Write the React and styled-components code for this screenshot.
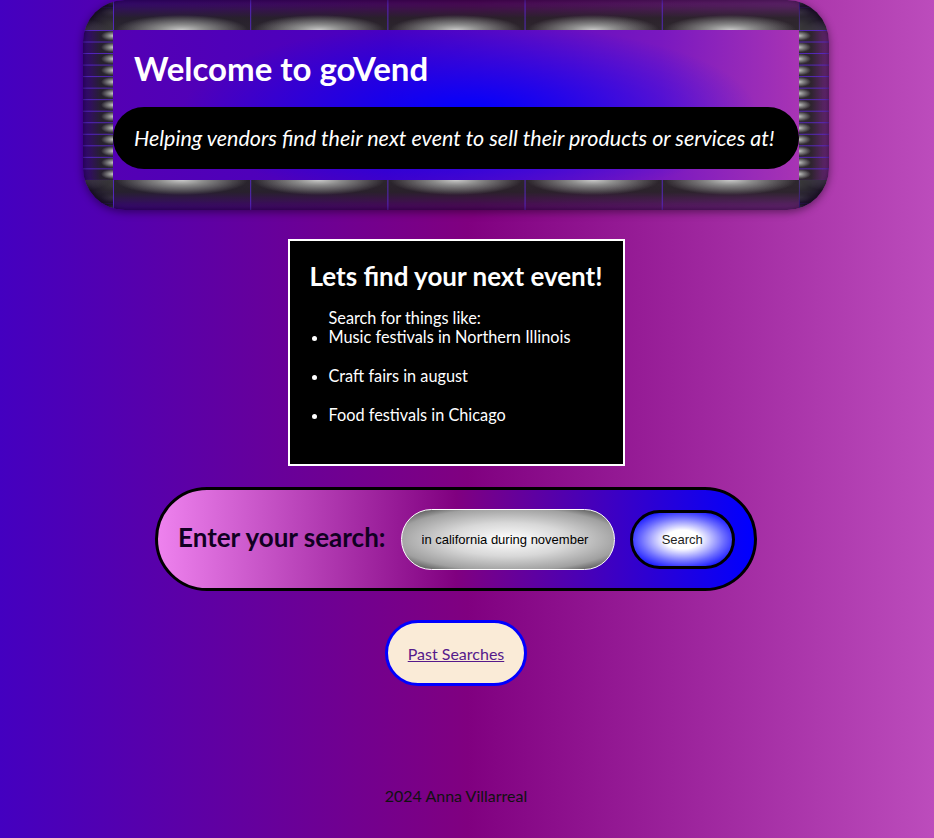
import React from 'react';
import styled, { createGlobalStyle } from 'styled-components';

const GlobalStyle = createGlobalStyle`
  html, body {
    margin: 0;
    padding: 0;
  }
  body {
    min-height: 838px;
    background: linear-gradient(to right, #4400c0 0%, #800080 50%, #bc4cbc 100%);
    font-family: "Lato", "DejaVu Sans", sans-serif;
  }
`;

// one tile of the banner frame: a grey glow against the inner edge, a dark body, a thin seam
const glowH = (at) =>
  `radial-gradient(ellipse 66px 15px at 50% ${at}, #c8c8c8 0%, #8a8a8a 35%, rgba(50,50,50,0) 100%)`;
const glowV = (at) =>
  `radial-gradient(ellipse 12px 5px at ${at} 50%, #c8c8c8 0%, #8a8a8a 35%, rgba(50,50,50,0) 100%)`;
const seamH = `linear-gradient(to right, rgba(90,40,210,0.85) 0 1px, rgba(0,0,0,0) 1px)`;
const seamV = `linear-gradient(to bottom, rgba(90,40,210,0.85) 0 1px, rgba(0,0,0,0) 1px)`;
const body = (dir) =>
  `linear-gradient(${dir}, rgba(25,10,60,0.45) 0%, rgba(35,35,35,0.92) 60%, rgba(40,40,40,0.95) 100%)`;
const corner = (pos) =>
  `radial-gradient(circle at ${pos}, rgba(70,70,70,0.6) 0%, rgba(25,10,45,0.5) 55%, rgba(20,0,60,0.25) 100%)`;

const H = '30px 0 / 137.2px 30px repeat-x';
const B = '30px 100% / 137.2px 30px repeat-x';
const L = '0 30px / 30px 11.54px repeat-y';
const R = '100% 30px / 30px 11.54px repeat-y';

const Page = styled.div`
  width: 912px;
  display: flex;
  flex-direction: column;
  align-items: center;
`;

const Banner = styled.header`
  width: 746px;
  height: 210px;
  box-sizing: border-box;
  padding: 30px;
  border-radius: 42px;
  box-shadow: inset 0 0 6px rgba(0, 0, 0, 0.6), 0 2px 9px rgba(0, 0, 0, 0.45);
  background:
    ${corner('100% 100%')} 0 0 / 30px 30px no-repeat,
    ${corner('0% 100%')} 100% 0 / 30px 30px no-repeat,
    ${corner('100% 0%')} 0 100% / 30px 30px no-repeat,
    ${corner('0% 0%')} 100% 100% / 30px 30px no-repeat,
    ${seamH} ${H}, ${glowH('100%')} ${H}, ${body('to bottom')} ${H},
    ${seamH} ${B}, ${glowH('0%')} ${B}, ${body('to top')} ${B},
    ${seamV} ${L}, ${glowV('100%')} ${L}, ${body('to right')} ${L},
    ${seamV} ${R}, ${glowV('0%')} ${R}, ${body('to left')} ${R};
`;

const BannerInner = styled.div`
  height: 150px;
  display: flex;
  flex-direction: column;
  background:
    radial-gradient(ellipse 42% 60% at 52% 55%, rgba(0, 0, 255, 1) 0%, rgba(0, 0, 255, 0) 100%),
    linear-gradient(to right, #5400b4 0%, #4a00c0 40%, #7a18c0 80%, #a834b4 100%);
`;

const Title = styled.h1`
  margin: 19px 0 20px 21px;
  font-size: 33px;
  line-height: 38px;
  font-weight: 700;
  color: #fff;
`;

const Tagline = styled.p`
  margin: 0;
  height: 62px;
  display: flex;
  align-items: center;
  padding-left: 21px;
  border-radius: 31px;
  background: #000;
  color: #fff;
  font-size: 21.5px;
  font-style: italic;
  white-space: nowrap;
`;

const Card = styled.section`
  margin-top: 29px;
  width: 337px;
  box-sizing: border-box;
  padding: 21px 20px 20px;
  border: 2px solid #fff;
  background: #000;
  color: #fff;
`;

const CardTitle = styled.h2`
  margin: 0 -10px;
  text-align: center;
  font-size: 26px;
  line-height: 28px;
  font-weight: 700;
  white-space: nowrap;
`;

const Ideas = styled.ul`
  margin: 18px 0 0;
  padding-left: 19px;
  font-size: 16.3px;
  line-height: 19px;
`;

const Intro = styled.li`
  list-style: none;
`;

const Idea = styled.li`
  margin-bottom: 20px;
`;

const SearchBar = styled.form`
  margin-top: 21px;
  width: 602px;
  height: 104px;
  box-sizing: border-box;
  border: 3px solid #000;
  border-radius: 52px;
  padding: 0 19px 0 20px;
  display: flex;
  align-items: center;
  gap: 15px;
  background: linear-gradient(to right, #ee82ee 0%, #800080 50%, #0000ff 100%);
`;

const Label = styled.label`
  margin-top: -4px;
  font-size: 26px;
  font-weight: 700;
  color: #110022;
  white-space: nowrap;
`;

const Field = styled.input`
  width: 214px;
  height: 61px;
  box-sizing: border-box;
  border: 1px solid #fff;
  border-radius: 31px;
  padding: 0 20px;
  background: radial-gradient(ellipse at center, #ffffff 0%, #d8d8d8 40%, #a0a0a0 75%, #555 92%, #2a2a2a 100%);
  font-family: "Liberation Sans", Arial, sans-serif;
  font-size: 13px;
  color: #000;
  outline: none;
`;

const SearchButton = styled.button`
  width: 106px;
  height: 59px;
  border: 3px solid #000;
  border-radius: 30px;
  background: radial-gradient(ellipse at center, #ffffff 0%, #ffffff 25%, #6a6aff 60%, #0000ff 88%);
  font-family: "Liberation Sans", Arial, sans-serif;
  font-size: 13px;
  color: #222;
`;

const PastButton = styled.div`
  margin-top: 29px;
  width: 142px;
  height: 66px;
  box-sizing: border-box;
  border: 3px solid #0000ff;
  border-radius: 33px;
  background: #faebd7;
  display: flex;
  align-items: center;
  justify-content: center;
`;

const PastLink = styled.a`
  color: #551a8b;
  font-size: 16px;
  text-decoration: underline;
`;

const Footer = styled.footer`
  margin-top: 100px;
  font-size: 16px;
  color: #111;
`;

export default function App() {
  return (
    <>
      <GlobalStyle />
      <Page>
        <Banner>
          <BannerInner>
            <Title>Welcome to goVend</Title>
            <Tagline>Helping vendors find their next event to sell their products or services at!</Tagline>
          </BannerInner>
        </Banner>

        <Card>
          <CardTitle>Lets find your next event!</CardTitle>
          <Ideas>
            <Intro>Search for things like:</Intro>
            <Idea>Music festivals in Northern Illinois</Idea>
            <Idea>Craft fairs in august</Idea>
            <Idea>Food festivals in Chicago</Idea>
          </Ideas>
        </Card>

        <SearchBar onSubmit={(e) => e.preventDefault()}>
          <Label htmlFor="search">Enter your search:</Label>
          <Field id="search" type="text" defaultValue="in california during november" />
          <SearchButton type="submit">Search</SearchButton>
        </SearchBar>

        <PastButton>
          <PastLink href="#past">Past Searches</PastLink>
        </PastButton>

        <Footer>2024 Anna Villarreal</Footer>
      </Page>
    </>
  );
}
